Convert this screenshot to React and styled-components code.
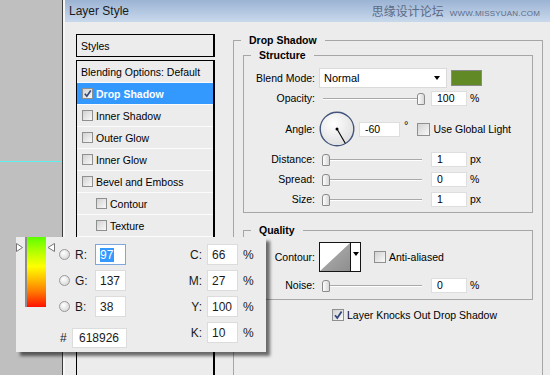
import React from "react";
import styled, { createGlobalStyle } from "styled-components";

const GlobalStyle = createGlobalStyle`
  html, body { margin: 0; padding: 0; }
  body { font-family: "Liberation Sans", Arial, sans-serif; }
`;

const Screen = styled.div`
  position: relative;
  width: 550px;
  height: 375px;
  overflow: hidden;
  display: flex;
  background: #bfbfbf;
  font-family: "Liberation Sans", Arial, sans-serif;
  font-size: 10.5px;
  color: #000;
`;

const Gutter = styled.div`
  position: relative;
  width: 62px;
  flex: none;
  background: #bfbfbf;
  border-right: 1px solid #3c3c3c;
`;

const Guide = styled.div`
  position: absolute;
  left: 0;
  right: 0;
  top: 161px;
  height: 1px;
  background: #5cf0f0;
`;

const Dialog = styled.div`
  flex: 1;
  display: flex;
  flex-direction: column;
  background: #ececec;
  border-left: 2px solid #f6f6f6;
`;

const TitleBar = styled.div`
  height: 22px;
  flex: none;
  display: flex;
  align-items: center;
  justify-content: space-between;
  padding: 0 10px 0 4px;
  background: linear-gradient(#9bb3d4, #c9d9ec);
`;

const Title = styled.span`
  font-size: 12px;
  color: #1b1b1b;
`;

const Watermark = styled.div`
  display: flex;
  align-items: baseline;
  gap: 6px;
  color: #5d6b85;
`;

const WatermarkCn = styled.span`
  font-family: "Noto Sans CJK SC", sans-serif;
  font-size: 12px;
  line-height: 14px;
`;

const WatermarkUrl = styled.span`
  font-size: 8px;
  letter-spacing: 0.2px;
`;

const Body = styled.div`
  flex: 1;
  display: flex;
  align-items: flex-start;
  padding: 12px 0 0 11px;
`;

const StylesColumn = styled.div`
  width: 139px;
  flex: none;
`;

const StylesHeader = styled.div`
  box-sizing: border-box;
  height: 23px;
  border: 1px solid #000;
  border-right-width: 2px;
  display: flex;
  align-items: center;
  padding-left: 4px;
`;

const StylesList = styled.div`
  box-sizing: border-box;
  height: 320px;
  margin-top: 3px;
  border: 1px solid #000;
  border-right-width: 2px;
`;

const StyleRow = styled.div`
  height: 21px;
  display: flex;
  align-items: center;
  gap: 3px;
  padding-left: ${(p) => (p.$sub ? 19 : p.$plain ? 4 : 5)}px;
  border-bottom: 1px solid #fbfbfb;
  background: ${(p) => (p.$active ? "#3399ff" : "transparent")};
  color: ${(p) => (p.$active ? "#fff" : "#000")};
  font-weight: ${(p) => (p.$active ? "bold" : "normal")};
`;

const CheckBox = styled.span`
  box-sizing: border-box;
  width: ${(p) => p.$size}px;
  height: ${(p) => p.$size}px;
  flex: none;
  display: inline-flex;
  align-items: center;
  justify-content: center;
  border: 1px solid #8e8f8f;
  background: linear-gradient(135deg, #d2d2d2, #f9f9f9);
`;

const RightPane = styled.div`
  margin-left: 18px;
  margin-top: -1px;
`;

const Group = styled.fieldset`
  box-sizing: border-box;
  margin: 0;
  padding: 0;
  min-width: 0;
  width: ${(p) => p.$w}px;
  height: ${(p) => (p.$h ? `${p.$h}px` : "auto")};
  border: 1px solid #a6a6a6;
`;

const GroupTitle = styled.legend`
  margin-left: 7px;
  padding: 0 8px;
  font-weight: bold;
  line-height: 14px;
`;

const DsInner = styled.div`
  padding: 1px 9px 0;
`;

const SubGroup = styled(Group)`
  margin-top: ${(p) => p.$mt}px;
`;

const GroupBody = styled.div`
  padding: ${(p) => p.$pt}px 0 ${(p) => p.$pb}px;
  display: flex;
  flex-direction: column;
`;

const Row = styled.div`
  height: ${(p) => p.$h || 20}px;
  margin-top: ${(p) => p.$mt || 0}px;
  display: flex;
  align-items: center;
`;

const Label = styled.span`
  width: 71px;
  margin-right: 4px;
  flex: none;
  text-align: right;
`;

const Select = styled.div`
  box-sizing: border-box;
  width: 128px;
  height: 20px;
  display: flex;
  align-items: center;
  justify-content: space-between;
  padding: 0 6px 0 4px;
  background: #fff;
  border: 1px solid #dadada;
  font-size: 11px;
`;

const Caret = styled.span`
  width: 0;
  height: 0;
  border-left: 3px solid transparent;
  border-right: 3px solid transparent;
  border-top: 4px solid #000;
`;

const Swatch = styled.div`
  box-sizing: border-box;
  width: 31px;
  height: 16px;
  margin-left: 4px;
  background: ${(p) => p.$color};
  border: 1px solid #8a8a8a;
`;

const SliderWrap = styled.div`
  position: relative;
  width: 108px;
  height: 20px;
  flex: none;

  &::before {
    content: "";
    position: absolute;
    left: 4px;
    right: 5px;
    top: 10px;
    height: 1px;
    background: #a9a9a9;
    border-bottom: 1px solid #fff;
  }
`;

const Thumb = styled.span`
  position: absolute;
  top: 5px;
  left: ${(p) => 3 + p.$pos * 95}px;
  box-sizing: border-box;
  width: 8px;
  height: 12px;
  border: 1px solid #8b8b8b;
  border-radius: 3px 3px 1px 1px;
  background: linear-gradient(90deg, #fdfdfd, #d8d8d8);
`;

const Field = styled.div`
  box-sizing: border-box;
  width: ${(p) => p.$w || 36}px;
  height: 15px;
  margin-left: ${(p) => p.$ml ?? 4}px;
  flex: none;
  display: flex;
  align-items: center;
  padding-left: 5px;
  background: #fff;
  border: 1px solid #dedede;
`;

const Unit = styled.span`
  margin-left: 3px;
`;

const Degree = styled.span`
  align-self: flex-start;
  margin-top: 10px;
  margin-left: 4px;
  font-size: 11px;
  line-height: 12px;
`;

const CheckLabel = styled.label`
  display: flex;
  align-items: center;
  gap: 3px;
  margin-left: ${(p) => p.$ml || 0}px;
`;

const ContourBox = styled.div`
  box-sizing: border-box;
  width: 42px;
  height: 30px;
  display: flex;
  border: 1px solid #151515;
  background: #fff;
`;

const ContourDrop = styled.div`
  flex: 1;
  display: flex;
  align-items: center;
  justify-content: center;
  border-left: 1px solid #151515;
  padding-bottom: 6px;
`;

const KnockRow = styled.div`
  margin-top: 8px;
  padding-left: 89px;
  height: 14px;
  display: flex;
`;

/* colour picker popup */

const Picker = styled.div`
  position: absolute;
  left: 16px;
  top: 237px;
  width: 250px;
  height: 115px;
  display: flex;
  background: #ececec;
  box-shadow: 4px 4px 3px rgba(0, 0, 0, 0.55);
  font-size: 12px;
  color: #1a1a1a;
`;

const Spectrum = styled.div`
  position: relative;
  width: 40px;
  flex: none;
  box-sizing: border-box;
  padding-left: 9px;
`;

const SpectrumBar = styled.div`
  box-sizing: border-box;
  width: 21px;
  height: 70px;
  border-left: 2px solid #8c8c8c;
  background: linear-gradient(
    #5cff00 0%,
    #b8ff00 22%,
    #ffff00 42%,
    #ffc000 60%,
    #ff7a00 78%,
    #ff1000 100%
  );
`;

const Marker = styled.svg`
  position: absolute;
  top: 6px;
  left: ${(p) => p.$left}px;
`;

const PickerCol = styled.div`
  display: flex;
  flex-direction: column;
  gap: 5px;
  padding-top: 7px;
  padding-left: ${(p) => p.$pl || 0}px;
  padding-right: ${(p) => p.$pr || 0}px;
  margin-left: ${(p) => (p.$right ? "auto" : "0")};
`;

const ChanRow = styled.div`
  height: 21px;
  display: flex;
  align-items: center;
  margin-top: ${(p) => p.$mt || 0}px;
`;

const Radio = styled.span`
  box-sizing: border-box;
  width: 11px;
  height: 11px;
  flex: none;
  border-radius: 50%;
  border: 1px solid #999;
  background: radial-gradient(circle at 40% 35%, #ffffff, #cfcfcf);
`;

const ChanLabel = styled.span`
  width: ${(p) => p.$w}px;
  margin-left: ${(p) => p.$ml || 0}px;
  margin-right: ${(p) => p.$mr || 0}px;
  text-align: ${(p) => p.$align || "left"};
  flex: none;
`;

const NumBox = styled.div`
  box-sizing: border-box;
  width: ${(p) => p.$w || 31}px;
  height: ${(p) => p.$h || 21}px;
  flex: none;
  display: flex;
  align-items: center;
  padding-left: ${(p) => p.$pl || 4}px;
  background: #fff;
  border: 1px solid ${(p) => (p.$focus ? "#7ea8dc" : "#dcdcdc")};
`;

const Selected = styled.span`
  background: #3399ff;
  color: #fff;
  padding-right: 1px;
`;

const Pct = styled.span`
  width: 12px;
  margin-left: 5px;
  flex: none;
`;

function Check({ checked, size = 11 }) {
  return (
    <CheckBox $size={size}>
      {checked && (
        <svg width={size - 2} height={size - 2} viewBox="0 0 10 10">
          <path d="M2 5.2 L4.3 8 L8.6 1.6" fill="none" stroke="#33477c" strokeWidth="1.8" />
        </svg>
      )}
    </CheckBox>
  );
}

function Slider({ pos }) {
  return (
    <SliderWrap>
      <Thumb $pos={pos} />
    </SliderWrap>
  );
}

function AngleDial() {
  return (
    <svg width="36" height="36" viewBox="0 0 36 36">
      <defs>
        <radialGradient id="dialFill" cx="40%" cy="35%" r="70%">
          <stop offset="0%" stopColor="#ffffff" />
          <stop offset="100%" stopColor="#dedede" />
        </radialGradient>
      </defs>
      <circle cx="18" cy="18" r="16.8" fill="url(#dialFill)" stroke="#44557d" strokeWidth="1.4" />
      <line x1="18" y1="18" x2="26.4" y2="32.6" stroke="#000" strokeWidth="1.1" />
      <circle cx="18" cy="18" r="1.5" fill="#000" />
    </svg>
  );
}

// rows further down are hidden behind the colour popup in the screenshot
const styleItems = [
  { name: "Blending Options: Default", plain: true },
  { name: "Drop Shadow", checked: true, active: true },
  { name: "Inner Shadow" },
  { name: "Outer Glow" },
  { name: "Inner Glow" },
  { name: "Bevel and Emboss" },
  { name: "Contour", sub: true },
  { name: "Texture", sub: true },
];

const rgb = [
  { ch: "R", value: "97", focus: true },
  { ch: "G", value: "137" },
  { ch: "B", value: "38" },
];

const cmyk = [
  { ch: "C", value: "66" },
  { ch: "M", value: "27" },
  { ch: "Y", value: "100" },
  { ch: "K", value: "10" },
];

export default function App() {
  return (
    <Screen>
      <GlobalStyle />
      <Gutter>
        <Guide />
      </Gutter>

      <Dialog>
        <TitleBar>
          <Title>Layer Style</Title>
          <Watermark>
            <WatermarkCn>思缘设计论坛</WatermarkCn>
            <WatermarkUrl>WWW.MISSYUAN.COM</WatermarkUrl>
          </Watermark>
        </TitleBar>

        <Body>
          <StylesColumn>
            <StylesHeader>Styles</StylesHeader>
            <StylesList>
              {styleItems.map((item) => (
                <StyleRow
                  key={item.name}
                  $active={item.active}
                  $sub={item.sub}
                  $plain={item.plain}
                >
                  {!item.plain && <Check checked={item.checked} />}
                  <span>{item.name}</span>
                </StyleRow>
              ))}
            </StylesList>
          </StylesColumn>

          <RightPane>
            <Group $w={310} $h={360}>
              <GroupTitle>Drop Shadow</GroupTitle>
              <DsInner>
                <SubGroup $w={290} $mt={0}>
                  <GroupTitle>Structure</GroupTitle>
                  <GroupBody $pt={6} $pb={3}>
                    <Row>
                      <Label>Blend Mode:</Label>
                      <Select>
                        Normal
                        <Caret />
                      </Select>
                      <Swatch $color="#618926" />
                    </Row>
                    <Row>
                      <Label>Opacity:</Label>
                      <Slider pos={1} />
                      <Field>100</Field>
                      <Unit>%</Unit>
                    </Row>
                    <Row $h={40} $mt={1}>
                      <Label>Angle:</Label>
                      <AngleDial />
                      <Field $w={41}>-60</Field>
                      <Degree>°</Degree>
                      <CheckLabel $ml={9}>
                        <Check size={13} />
                        Use Global Light
                      </CheckLabel>
                    </Row>
                    <Row>
                      <Label>Distance:</Label>
                      <Slider pos={0} />
                      <Field>1</Field>
                      <Unit>px</Unit>
                    </Row>
                    <Row>
                      <Label>Spread:</Label>
                      <Slider pos={0} />
                      <Field>0</Field>
                      <Unit>%</Unit>
                    </Row>
                    <Row>
                      <Label>Size:</Label>
                      <Slider pos={0} />
                      <Field>1</Field>
                      <Unit>px</Unit>
                    </Row>
                  </GroupBody>
                </SubGroup>

                <SubGroup $w={290} $mt={10}>
                  <GroupTitle>Quality</GroupTitle>
                  <GroupBody $pt={5} $pb={4}>
                    <Row $h={30}>
                      <Label>Contour:</Label>
                      <ContourBox>
                        <svg width="30" height="28" viewBox="0 0 30 28">
                          <defs>
                            <linearGradient id="contourFill" x1="0" y1="0" x2="1" y2="1">
                              <stop offset="0%" stopColor="#b4b4b4" />
                              <stop offset="100%" stopColor="#8e8e8e" />
                            </linearGradient>
                          </defs>
                          <polygon points="0,28 30,0 30,28" fill="url(#contourFill)" />
                        </svg>
                        <ContourDrop>
                          <Caret />
                        </ContourDrop>
                      </ContourBox>
                      <CheckLabel $ml={13}>
                        <Check size={12} />
                        Anti-aliased
                      </CheckLabel>
                    </Row>
                    <Row $mt={3}>
                      <Label>Noise:</Label>
                      <Slider pos={0} />
                      <Field>0</Field>
                      <Unit>%</Unit>
                    </Row>
                  </GroupBody>
                </SubGroup>

                <KnockRow>
                  <CheckLabel>
                    <Check size={12} checked />
                    Layer Knocks Out Drop Shadow
                  </CheckLabel>
                </KnockRow>
              </DsInner>
            </Group>
          </RightPane>
        </Body>
      </Dialog>

      <Picker>
        <Spectrum>
          <Marker $left={0} width="7" height="9" viewBox="0 0 7 9">
            <polygon points="0.5,0.5 6.5,4.5 0.5,8.5" fill="#fff" stroke="#777" />
          </Marker>
          <SpectrumBar />
          <Marker $left={31} width="8" height="9" viewBox="0 0 8 9">
            <polygon points="7.5,0.5 1,4.5 7.5,8.5" fill="#fff" stroke="#777" />
          </Marker>
        </Spectrum>

        <PickerCol $pl={3}>
          {rgb.map((c) => (
            <ChanRow key={c.ch}>
              <Radio />
              <ChanLabel $w={20} $ml={5}>
                {c.ch}:
              </ChanLabel>
              <NumBox $focus={c.focus}>
                {c.focus ? <Selected>{c.value}</Selected> : c.value}
              </NumBox>
            </ChanRow>
          ))}
          <ChanRow $mt={5}>
            <ChanLabel $w={12} $ml={1}>
              #
            </ChanLabel>
            <NumBox $w={55} $h={20} $pl={6}>
              618926
            </NumBox>
          </ChanRow>
        </PickerCol>

        <PickerCol $right $pr={11}>
          {cmyk.map((c) => (
            <ChanRow key={c.ch}>
              <ChanLabel $w={20} $mr={5} $align="right">
                {c.ch}:
              </ChanLabel>
              <NumBox>{c.value}</NumBox>
              <Pct>%</Pct>
            </ChanRow>
          ))}
        </PickerCol>
      </Picker>
    </Screen>
  );
}
